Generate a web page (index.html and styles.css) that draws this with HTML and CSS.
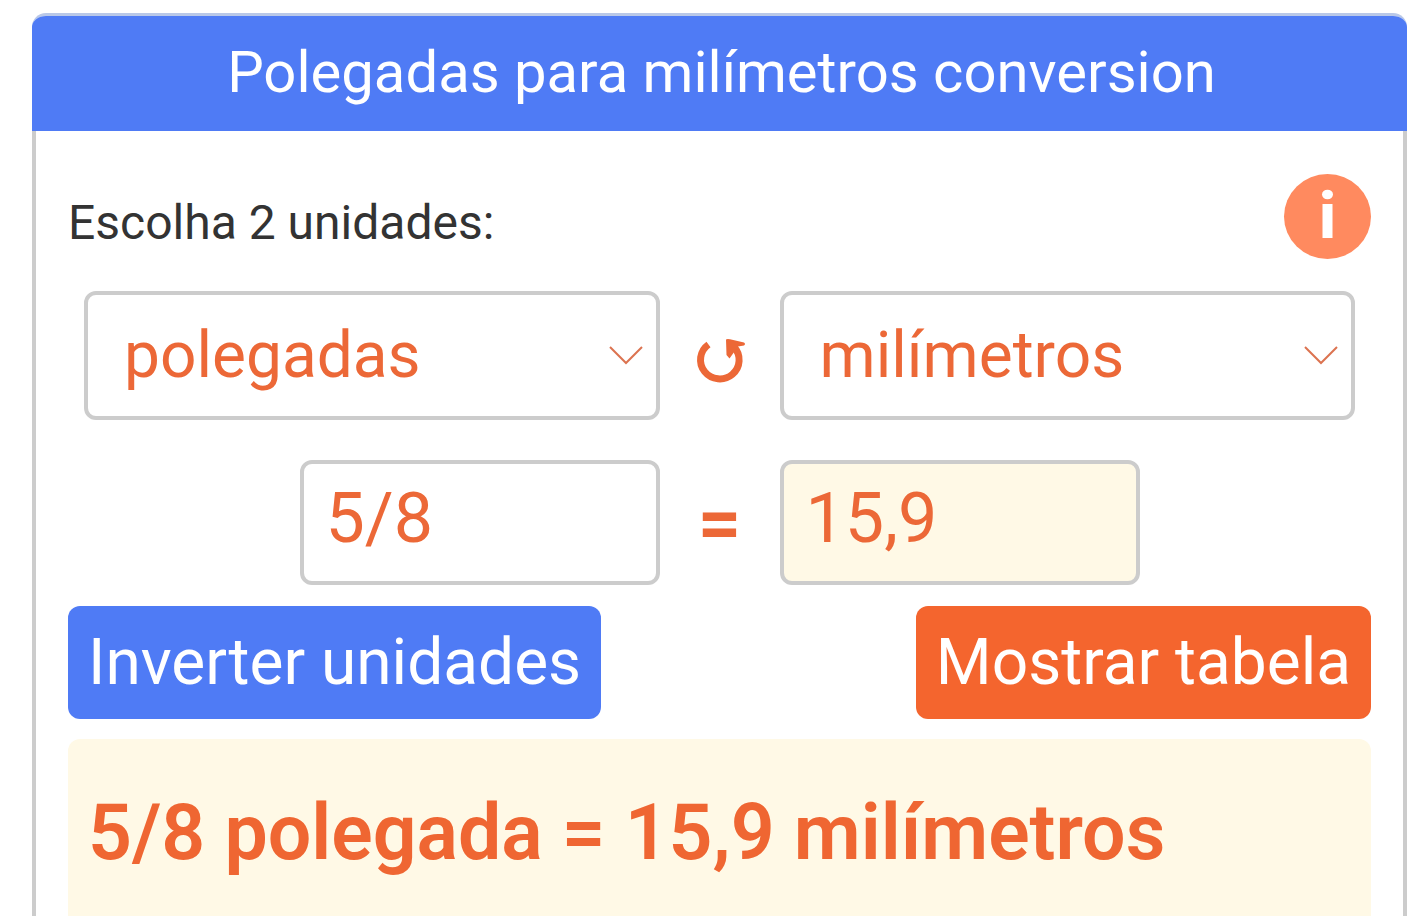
FILE: index.html
```html
<!DOCTYPE html>
<html lang="pt">
<head>
<meta charset="utf-8">
<meta name="viewport" content="width=device-width, initial-scale=1">
<title>Polegadas para milímetros conversion</title>
<link rel="stylesheet" href="styles.css">
</head>
<body>
<main class="converter">
  <h1 class="converter-title">Polegadas para milímetros conversion</h1>
  <form class="converter-body">
    <div class="intro">
      <p class="intro-text">Escolha 2 unidades:</p>
      <button type="button" class="info" aria-label="Informações">
        <svg viewBox="0 0 88 86" aria-hidden="true">
          <ellipse cx="44.500" cy="42.500" rx="43.500" ry="42.500" fill="#ff8a5f"/>
          <ellipse cx="44.500" cy="20.500" rx="5.500" ry="4.800" fill="#fff"/>
          <rect x="39.500" y="30" width="10" height="34" fill="#fff"/>
        </svg>
      </button>
    </div>
    <div class="units">
      <div class="select-box">
        <select class="unit" aria-label="Unidade de origem"><option>polegadas</option></select>
        <svg class="chevron" viewBox="0 0 34 20" aria-hidden="true"><path d="M1 2 17 18 33 2"/></svg>
      </div>
      <button type="button" class="swap" aria-label="Trocar">
        <svg viewBox="0 0 50 46" aria-hidden="true">
          <path d="M13.500 6.500A19.300 19 0 1 0 39 9" fill="none" stroke="#ec6837" stroke-width="7"/>
          <path d="M31 1.500Q32 .500 35 1.200L49 4.500Q51 6 49 7.500L43 8.500 37 17 34.500 20.500 31.500 17Z" fill="#ec6837"/>
        </svg>
      </button>
      <div class="select-box">
        <select class="unit" aria-label="Unidade de destino"><option>milímetros</option></select>
        <svg class="chevron" viewBox="0 0 34 20" aria-hidden="true"><path d="M1 2 17 18 33 2"/></svg>
      </div>
    </div>
    <div class="units values">
      <input class="value value-from" type="text" value="5/8" aria-label="Valor em polegadas">
      <span class="equals">=</span>
      <input class="value value-to" type="text" value="15,9" readonly aria-label="Valor em milímetros">
    </div>
    <div class="actions">
      <button type="button" class="action action-invert">Inverter unidades</button>
      <button type="button" class="action action-table">Mostrar tabela</button>
    </div>
    <p class="result">5/8 polegada = 15,9 milímetros</p>
  </form>
</main>
</body>
</html>
```
FILE: styles.css
```css
* {
  box-sizing: border-box;
}

body {
  margin: 0;
  padding: 13px 11px 0 32px;
  background: #fff;
  color: #333;
  font-family: Roboto, "Liberation Sans", sans-serif;
}

button,
input,
select {
  margin: 0;
  font-family: inherit;
}

.converter {
  display: flex;
  flex-direction: column;
  min-height: calc(100vh - 13px);
  border-top: 3px solid #b9c8e8;
  border-radius: 14px 14px 0 0;
  overflow: hidden;
}

.converter-title {
  margin: 0;
  padding: 20px 12px 23px 16px;
  background: #4f7bf5;
  color: #fff;
  font-size: 58px;
  font-weight: 400;
  line-height: 72px;
  text-align: center;
}

.converter-body {
  display: flex;
  flex-direction: column;
  flex: 1;
  padding: 43px 32px 0;
  border: solid #ccc;
  border-width: 0 4px;
}

.intro {
  display: flex;
  justify-content: space-between;
  align-items: center;
}

.intro-text {
  margin: 0;
  padding-top: 12px;
  font-size: 48px;
  line-height: 60px;
}

.info {
  width: 88px;
  height: 86px;
  padding: 0;
  border: 0;
  background: none;
}

.info svg,
.swap svg {
  display: block;
  width: 100%;
  height: 100%;
}

.units {
  display: grid;
  grid-template-columns: 1fr 120px 1fr;
  align-items: center;
  justify-items: center;
  padding: 31px 16px 0;
}

.select-box {
  position: relative;
  width: 100%;
}

.unit {
  display: block;
  width: 100%;
  height: 129px;
  padding: 0 60px 0 36px;
  border: 4px solid #ccc;
  border-radius: 12px;
  appearance: none;
  background: #fff;
  color: #ec6837;
  font-size: 64px;
}

.chevron {
  position: absolute;
  top: 54px;
  right: 17px;
  width: 34px;
  height: 20px;
  fill: none;
  stroke: #dc7350;
  stroke-width: 2;
  pointer-events: none;
}

.swap {
  width: 50px;
  height: 46px;
  margin-top: 10px;
  padding: 0;
  border: 0;
  background: none;
}

.values {
  padding-top: 40px;
}

.value {
  width: 360px;
  max-width: 100%;
  height: 125px;
  padding: 0 22px 10px;
  border: 4px solid #ccc;
  border-radius: 12px;
  background: #fff;
  color: #ec6837;
  font-size: 70px;
}

.value-from {
  justify-self: end;
}

.value-to {
  justify-self: start;
  background: #fff9e6;
}

.equals {
  color: #ec6837;
  font-size: 76px;
  font-weight: 700;
  line-height: 80px;
}

.actions {
  display: flex;
  justify-content: space-between;
  padding: 21px 0 20px;
}

.action {
  height: 113px;
  padding: 0 20px;
  border: 0;
  border-radius: 12px;
  color: #fff;
  font-size: 64px;
  line-height: 113px;
}

.action-invert {
  background: #4f7bf5;
}

.action-table {
  background: #f4652e;
}

.result {
  flex: 1;
  margin: 0;
  padding: 48px 20px 0;
  border-radius: 12px 12px 0 0;
  background: #fff9e6;
  color: #ef6632;
  font-size: 77px;
  font-weight: 600;
  line-height: 92px;
}
```
